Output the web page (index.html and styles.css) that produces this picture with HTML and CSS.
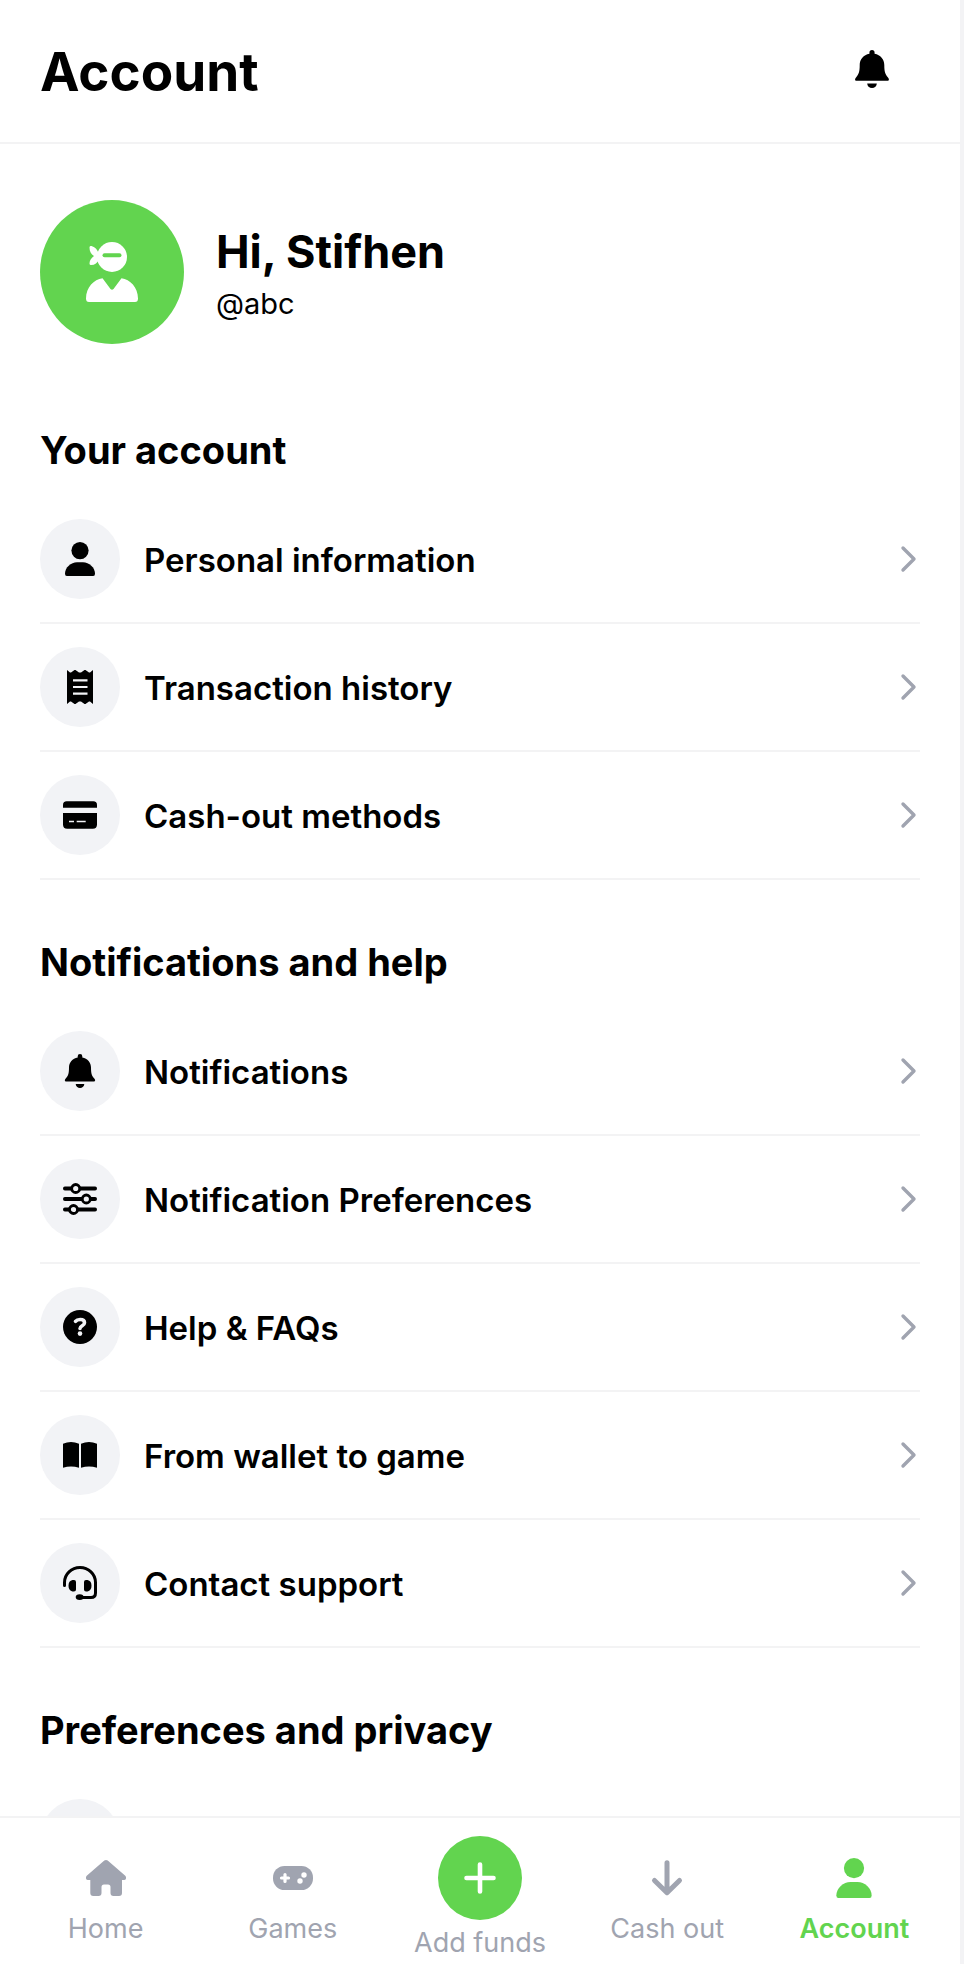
FILE: index.html
```html
<!DOCTYPE html>
<html lang="en">
<head>
  <meta charset="UTF-8" />
  <meta name="viewport" content="width=device-width, initial-scale=1.0"/>
  <title>Account</title>
  <link rel="stylesheet" href="styles.css">
</head>
<body>
  <!-- Shared icons -->
  <svg class="sprite" aria-hidden="true">
    <symbol id="bell" viewBox="0 0 34 34">
      <path d="M17 0a2.3 2.3 0 0 1 2.3 2.3v1.1C24.6 4.4 28 8.3 28 13.5c0 6 .8 8.300 3.300 11 1.600 1.900.7 3.100-.9 3.100H3.600c-1.600 0-2.500-1.200-.9-3.100C5.200 21.800 6 19.500 6 13.500 6 8.300 9.400 4.400 14.700 3.400V2.300A2.300 2.300 0 0 1 17 0z"/>
      <path d="M12.700 30h8.600a4.300 4 0 0 1-8.600 0z"/>
    </symbol>
    <symbol id="person" viewBox="0 0 34 34">
      <circle cx="17" cy="8.6" r="8.6"/>
      <path d="M3.800 34Q2 34 2 31.800C2 25.500 8 20.300 14 20.300h6c6 0 12 5.200 12 11.500Q32 34 30.200 34z"/>
    </symbol>
    <symbol id="chevron" viewBox="0 0 18 28">
      <path d="M3 3l11 11L3 25" fill="none" stroke="currentColor" stroke-width="3.4" stroke-linecap="round" stroke-linejoin="round"/>
    </symbol>
  </svg>

  <div class="app">
    <header class="topbar">
      <h1>Account</h1>
      <button class="bell-button" aria-label="Notifications">
        <svg class="bell-icon"><use href="#bell"/></svg>
      </button>
    </header>

    <main class="content">
      <!-- Profile -->
      <div class="profile">
        <div class="avatar">
          <svg viewBox="0 0 60 64" aria-hidden="true">
            <circle cx="30" cy="17" r="15" fill="#fff"/>
            <path d="M17 14C15 8 11 6 8.500 6q-1 0-1 1.500c0 4 1.500 6.500 4.500 8.500-3 2-4.500 5-4.500 7.500q0 1.500 1.500 1.500c4 0 6.500-2 8-6z" fill="#fff"/>
            <path d="M22.500 15.300h15" stroke="#62d44f" stroke-width="4" stroke-linecap="round"/>
            <path d="M20.500 38.200L28.500 49q1.500 1.500 3 0L39.500 38.200C48 39.500 56 47 56 58.500Q56 62 53 62H7Q4 62 4 58.500C4 47 12 39.500 20.500 38.200z" fill="#fff"/>
          </svg>
        </div>
        <div>
          <p class="greeting">Hi, Stifhen</p>
          <p class="handle">@abc</p>
        </div>
      </div>

      <section>
        <h2>Your account</h2>
        <a class="row" href="#">
          <span class="icon"><svg><use href="#person"/></svg></span>
          <span class="label">Personal information</span>
          <svg class="chevron"><use href="#chevron"/></svg>
        </a>
        <a class="row" href="#">
          <span class="icon">
            <svg viewBox="0 0 34 34">
              <path d="M4 0l3 2.500h1L11.500 0h1L16 2.500h2L21.500 0h1L26 2.500h1L30 0v34l-3-2.500h-1L22.500 34h-1L18 31.500h-2L12.500 34h-1L8 31.500H7L4 34z"/>
              <path d="M10 10.300h14.500M10 17h14.500M10 23.600h14.500" stroke="#f2f3f6" stroke-width="2.2"/>
            </svg>
          </span>
          <span class="label">Transaction history</span>
          <svg class="chevron"><use href="#chevron"/></svg>
        </a>
        <a class="row" href="#">
          <span class="icon">
            <svg viewBox="0 0 34 34">
              <path d="M0 9.700V7q0-3.700 3.700-3.700h26.600Q34 3.300 34 7v2.700zM0 15h34v11.500q0 4.200-4.200 4.200H4.200Q0 30.700 0 26.500z"/>
              <path d="M6 23.500h5M13.700 23.500h9" stroke="#f2f3f6" stroke-width="1.6"/>
            </svg>
          </span>
          <span class="label">Cash-out methods</span>
          <svg class="chevron"><use href="#chevron"/></svg>
        </a>
      </section>

      <section>
        <h2>Notifications and help</h2>
        <a class="row" href="#">
          <span class="icon"><svg><use href="#bell"/></svg></span>
          <span class="label">Notifications</span>
          <svg class="chevron"><use href="#chevron"/></svg>
        </a>
        <a class="row" href="#">
          <span class="icon">
            <svg viewBox="0 0 34 34" fill="none" stroke="#000">
              <path d="M1.900 6.500h30.200M1.900 17h30.200M1.900 27.500h30.200" stroke-width="3.800" stroke-linecap="round"/>
              <g fill="#f2f3f6" stroke-width="2.8">
                <circle cx="12.7" cy="6.5" r="4"/>
                <circle cx="23.3" cy="17" r="4"/>
                <circle cx="10.5" cy="27.5" r="4"/>
              </g>
            </svg>
          </span>
          <span class="label">Notification Preferences</span>
          <svg class="chevron"><use href="#chevron"/></svg>
        </a>
        <a class="row" href="#">
          <span class="icon">
            <svg viewBox="0 0 34 34">
              <circle cx="17" cy="17" r="17"/>
              <path d="M12.500 11.300C13.500 10 15 9.500 17.200 9.500c2.700 0 4.300 1.300 4.300 3.200 0 3.200-4.500 2.800-4.500 5.800" fill="none" stroke="#f2f3f6" stroke-width="3.6" stroke-linecap="round"/>
              <circle cx="17" cy="23.6" r="2.3" fill="#f2f3f6"/>
            </svg>
          </span>
          <span class="label">Help &amp; FAQs</span>
          <svg class="chevron"><use href="#chevron"/></svg>
        </a>
        <a class="row" href="#">
          <span class="icon">
            <svg viewBox="0 0 34 34">
              <path d="M0 5.700Q8 2.500 16 5.700v24q-8-2.600-16 0zM18 5.700q8-3.200 16 0v24q-8-2.600-16 0z"/>
            </svg>
          </span>
          <span class="label">From wallet to game</span>
          <svg class="chevron"><use href="#chevron"/></svg>
        </a>
        <a class="row" href="#">
          <span class="icon">
            <svg viewBox="0 0 34 34">
              <path d="M1.500 19.500V16.500a15.500 15 0 0 1 31 0V27q0 4.500-4.500 4.500H17" fill="none" stroke="#000" stroke-width="3" stroke-linecap="round"/>
              <path d="M9.500 14H11q2 0 2 2v7.500q0 2-2 2H9.500Q5.500 24.500 5.500 19.700T9.500 14zM24.500 14H23q-2 0-2 2v7.500q0 2 2 2h1.500q4-1 4-5.800T24.500 14z"/>
              <ellipse cx="16.7" cy="31.1" rx="4" ry="2.9"/>
            </svg>
          </span>
          <span class="label">Contact support</span>
          <svg class="chevron"><use href="#chevron"/></svg>
        </a>
      </section>

      <section>
        <h2>Preferences and privacy</h2>
        <a class="row" href="#" aria-label="Privacy">
          <span class="icon"></span>
        </a>
      </section>
    </main>

    <!-- Bottom navigation -->
    <nav class="tabs">
      <a class="tab" href="#">
        <svg class="tab-icon" viewBox="0 0 40 40">
          <path d="M18.300 2.600q1.700-1.300 3.400 0L39 17.600q1.300 1.300 1 2.900-.4 1.500-2 1.500h-2v13q0 3-3 3h-5.500q-3 0-3-3v-6q0-2.500-2.500-2.500h-4q-2.500 0-2.500 2.500v6q0 3-3 3H7.300q-3 0-3-3V22H2Q.4 22 0 20.500q-.3-1.600 1-2.900z"/>
        </svg>
        <span>Home</span>
      </a>
      <a class="tab" href="#">
        <svg class="tab-icon" viewBox="0 0 40 40">
          <rect y="8" width="40" height="24" rx="11.5"/>
          <path d="M12 16.500v7M8.500 20h7" stroke="#fff" stroke-width="3.2" stroke-linecap="round"/>
          <circle cx="31" cy="17" r="2.7" fill="#fff"/>
          <circle cx="27" cy="23" r="2.7" fill="#fff"/>
        </svg>
        <span>Games</span>
      </a>
      <a class="tab tab-add" href="#">
        <span class="add-circle">
          <svg viewBox="0 0 32 32">
            <path d="M16 2.500v27M2.500 16h27" stroke="#fff" stroke-width="4.6" stroke-linecap="round"/>
          </svg>
        </span>
        <span>Add funds</span>
      </a>
      <a class="tab" href="#">
        <svg class="tab-icon" viewBox="0 0 40 40">
          <path d="M20 4.800V34M7.500 22.500L20 34.700l12.500-12.200" fill="none" stroke="currentColor" stroke-width="5" stroke-linecap="round" stroke-linejoin="round"/>
        </svg>
        <span>Cash out</span>
      </a>
      <a class="tab active" href="#" aria-current="page">
        <svg class="tab-icon"><use href="#person"/></svg>
        <span>Account</span>
      </a>
    </nav>
  </div>
</body>
</html>
```
FILE: styles.css
```css
* {
  box-sizing: border-box;
}

body {
  margin: 0;
  font-family: Inter, 'Liberation Sans', sans-serif;
  background: #fff;
  color: #000;
}

h1, h2, p {
  margin: 0;
}

a {
  color: inherit;
  text-decoration: none;
}

.sprite {
  display: none;
}

.app {
  display: flex;
  flex-direction: column;
  height: 100vh;
  border-right: 4px solid #f3f3f5;
}

.topbar {
  display: flex;
  align-items: center;
  justify-content: space-between;
  padding: 36px 68px 34px 40px;
  border-bottom: 2px solid #f3f3f4;
}

h1 {
  font-size: 53px;
  line-height: 72px;
  font-weight: 700;
}

.bell-button {
  display: flex;
  padding: 0 0 6px;
  border: none;
  background: none;
  color: #000;
  cursor: pointer;
}

.bell-icon {
  width: 40px;
  height: 38px;
}

.content {
  flex: 1;
  min-height: 0;
  padding: 0 40px;
  overflow-y: auto;
  scrollbar-width: none;
}

.profile {
  display: flex;
  align-items: center;
  gap: 32px;
  padding: 56px 0 24px;
}

.avatar {
  display: flex;
  align-items: center;
  justify-content: center;
  width: 144px;
  height: 144px;
  border-radius: 50%;
  background: #62d44f;
}

.avatar svg {
  width: 60px;
  height: 64px;
}

.greeting {
  padding-top: 4px;
  font-size: 45px;
  line-height: 60px;
  font-weight: 700;
}

.handle {
  font-size: 29px;
  line-height: 44px;
}

h2 {
  padding: 58px 0 22px;
  font-size: 38px;
  line-height: 48px;
  font-weight: 700;
}

.row {
  display: flex;
  align-items: center;
  gap: 24px;
  padding: 23px 0;
  border-bottom: 2px solid #f3f3f4;
}

.icon {
  display: flex;
  align-items: center;
  justify-content: center;
  width: 80px;
  height: 80px;
  border-radius: 50%;
  background: #f2f3f6;
}

.icon svg {
  width: 34px;
  height: 34px;
}

.label {
  flex: 1;
  padding-top: 2px;
  font-size: 33px;
  line-height: 40px;
  font-weight: 600;
}

.chevron {
  width: 18px;
  height: 28px;
  margin-right: 2px;
  color: #a0a4b0;
}

.tabs {
  display: grid;
  grid-template-columns: repeat(5, 1fr);
  height: 148px;
  padding: 0 12px;
  border-top: 2px solid #f3f3f4;
  background: #fff;
}

.tab {
  display: flex;
  flex-direction: column;
  align-items: center;
  gap: 14px;
  padding-top: 40px;
  color: #a0a4b0;
  font-size: 27px;
  line-height: 34px;
}

.tab-icon {
  width: 40px;
  height: 40px;
  fill: currentColor;
}

.tab-add {
  gap: 6px;
  padding-top: 18px;
}

.add-circle {
  display: flex;
  align-items: center;
  justify-content: center;
  width: 84px;
  height: 84px;
  border-radius: 50%;
  background: #62d44f;
}

.add-circle svg {
  width: 32px;
  height: 32px;
}

.active {
  color: #62d44f;
  font-weight: 600;
}
```
